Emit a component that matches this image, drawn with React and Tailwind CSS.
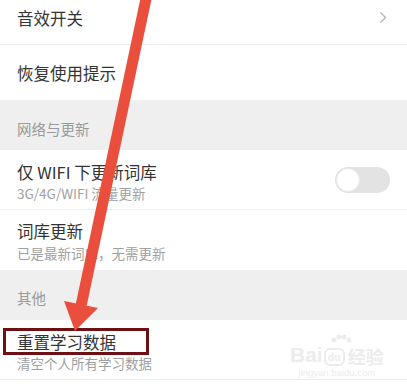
import React from "react";

const font = { fontFamily: '"Noto Sans CJK SC", "Noto Sans", sans-serif' };

function Toggle() {
  return (
    <div className="w-[55px] h-[26px] rounded-full bg-[#e3e3e3] flex items-center px-[1px]">
      <div className="w-[24px] h-[24px] rounded-full bg-white border border-[#e8e8e8]" />
    </div>
  );
}

export default function App() {
  return (
    <div className="relative w-[407px] h-[391px] overflow-hidden bg-white" style={font}>
      <div className="flex flex-col">
        <div className="h-[45px] flex items-center justify-between pl-[17px] pr-[20px] pb-[9px] border-b border-[#eeeeee]">
          <span className="text-[16.5px] leading-[20px] text-[#333333]">音效开关</span>
          <svg width="8" height="13" viewBox="0 0 8 13">
            <path d="M1.5 1.5 L6.5 6.5 L1.5 11.5" fill="none" stroke="#b5b5b5" strokeWidth="1.4" />
          </svg>
        </div>
        <div className="h-[55px] flex items-center pl-[17px]">
          <span className="text-[16.5px] leading-[20px] text-[#333333]">恢复使用提示</span>
        </div>
        <div className="h-[50px] bg-[#efefef] pl-[17px] pt-[19px]">
          <span className="block text-[14.5px] leading-[20px] text-[#9a9a9a]">网络与更新</span>
        </div>
        <div className="h-[60px] flex items-start justify-between pl-[17px] pr-[17px] pt-[12px] border-b border-[#eeeeee]">
          <div className="flex flex-col">
            <span className="text-[16.5px] leading-[20px] text-[#333333]">仅 WIFI 下更新词库</span>
            <span className="mt-[2px] text-[13.5px] leading-[18px] text-[#a0a0a0]">3G/4G/WIFI 流量更新</span>
          </div>
          <div className="mt-[5px]">
            <Toggle />
          </div>
        </div>
        <div className="h-[60px] flex flex-col pl-[17px] pt-[11px]">
          <span className="text-[16.5px] leading-[20px] text-[#333333]">词库更新</span>
          <span className="mt-[3px] text-[13.5px] leading-[18px] text-[#a0a0a0]">已是最新词库，无需更新</span>
        </div>
        <div className="h-[50px] bg-[#efefef] pl-[17px] pt-[18px]">
          <span className="block text-[14.5px] leading-[20px] text-[#9a9a9a]">其他</span>
        </div>
        <div className="h-[60px] flex flex-col pl-[17px] pt-[12px] border-b border-[#eeeeee]">
          <span className="text-[16.5px] leading-[20px] text-[#333333]">重置学习数据</span>
          <span className="mt-[2px] text-[13.5px] leading-[18px] text-[#a0a0a0]">清空个人所有学习数据</span>
        </div>
      </div>

      {/* Baidu watermark */}
      <div className="absolute left-[290px] top-[334px] flex flex-col items-center text-[#ececec] pointer-events-none">
        <svg width="22" height="10" viewBox="0 0 22 10" className="ml-[8px]">
          <circle cx="4" cy="6" r="2.5" fill="#ececec" />
          <circle cx="9" cy="3" r="2.5" fill="#ececec" />
          <circle cx="14" cy="3" r="2.5" fill="#ececec" />
          <circle cx="19" cy="6" r="2.5" fill="#ececec" />
        </svg>
        <div className="flex items-end gap-[1px]">
          <span className="text-[21px] leading-[22px] font-bold" style={{ fontFamily: '"Liberation Sans", sans-serif' }}>Bai</span>
          <span className="w-[21px] h-[18px] rounded-[6px] border-2 border-[#ececec] text-[10px] leading-[14px] text-center font-bold">du</span>
          <span className="text-[18px] leading-[20px] font-bold ml-[2px]">经验</span>
        </div>
        <span className="text-[9.5px] leading-[12px] mt-[1px]" style={{ fontFamily: '"Liberation Sans", sans-serif' }}>jingyan.baidu.com</span>
      </div>

      {/* red box */}
      <div className="absolute left-[3px] top-[328px] w-[146px] h-[27px] border-[3px] border-[#6e1014]" />

      {/* arrow */}
      <svg className="absolute left-0 top-0 pointer-events-none" width="407" height="391" viewBox="0 0 407 391">
        <line x1="147" y1="-6" x2="81" y2="306" stroke="#ea4f3d" strokeWidth="11" />
        <polygon points="64,301 98,308 75,331" fill="#ea4f3d" />
      </svg>
    </div>
  );
}
